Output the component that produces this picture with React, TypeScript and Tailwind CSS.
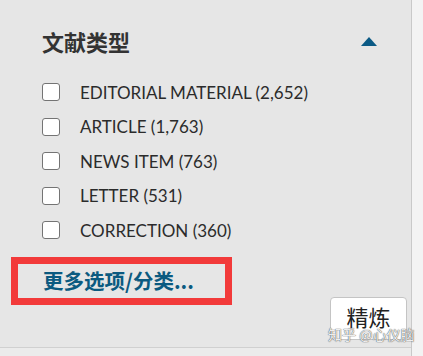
import { useState } from 'react'

const types = [
  { label: 'EDITORIAL MATERIAL', count: '2,652' },
  { label: 'ARTICLE', count: '1,763' },
  { label: 'NEWS ITEM', count: '763' },
  { label: 'LETTER', count: '531' },
  { label: 'CORRECTION', count: '360' },
]

const latin = { fontFamily: 'Lato, "Noto Sans CJK SC", sans-serif' }
const cjk = { fontFamily: '"Noto Sans CJK SC", "Noto Sans", sans-serif' }

export default function App() {
  const [checked, setChecked] = useState<boolean[]>(types.map(() => false))

  return (
    <div className="flex h-[356px] w-[423px] overflow-hidden bg-[#f3f3f3]">
      <div className="relative flex w-[412px] flex-col border-r border-[#c9c9c9]">
        {/* filter panel */}
        <div className="h-[348px] border-b border-[#d0d0d0] bg-[#e6e6e6]">
          {/* header */}
          <div className="mt-[26px] flex h-[30px] items-center pl-[42px] pr-[34px]">
            <h3 className="text-[22px] font-bold leading-[30px] text-[#333333]" style={cjk}>
              文献类型
            </h3>
            <svg className="ml-auto" width="16" height="9" viewBox="0 0 16 9">
              <path d="M8 0 L16 9 L0 9 Z" fill="#0b5a85" />
            </svg>
          </div>

          {/* options */}
          <ul className="mt-[19px] pl-[42px]">
            {types.map((t, i) => (
              <li key={t.label} className="flex h-[34.5px] items-center">
                <button
                  onClick={() => setChecked(c => c.map((v, j) => (j === i ? !v : v)))}
                  className="flex h-[18px] w-[18px] shrink-0 items-center justify-center rounded-[3px] border-[1.5px] border-[#747474] bg-white"
                >
                  {checked[i] && <span className="h-[8px] w-[8px] bg-[#0b5a85]" />}
                </button>
                <span className="ml-[20px] text-[17px] leading-none text-[#2b2b2b]" style={latin}>
                  {t.label} ({t.count})
                </span>
              </li>
            ))}
          </ul>

          {/* more + refine */}
          <div className="mt-[9px] flex items-start">
            <div className="ml-[11px] flex h-[48px] w-[221px] items-center border-[7px] border-[#f23a3a] pl-[25px]">
              <a className="text-[20.5px] font-bold leading-none text-[#0b5a80]" style={cjk}>
                更多选项/分类...
              </a>
            </div>
            <button
              className="ml-auto mr-[4px] mt-[40px] flex h-[43px] w-[77px] items-center justify-center rounded-[4px] border border-[#c4c4c4] bg-white pb-[4px] text-[22px] text-[#222222]"
              style={cjk}
            >
              精炼
            </button>
          </div>
        </div>
        <div className="flex-1 bg-[#ebebeb]" />

        {/* watermark */}
        <span
          className="absolute left-[328px] top-[327px] whitespace-nowrap text-[14px] leading-none text-white/90 [text-shadow:0_0_1px_#555,0_0_1px_#555]"
          style={cjk}
        >
          知乎 @心仪脑
        </span>
      </div>
    </div>
  )
}
